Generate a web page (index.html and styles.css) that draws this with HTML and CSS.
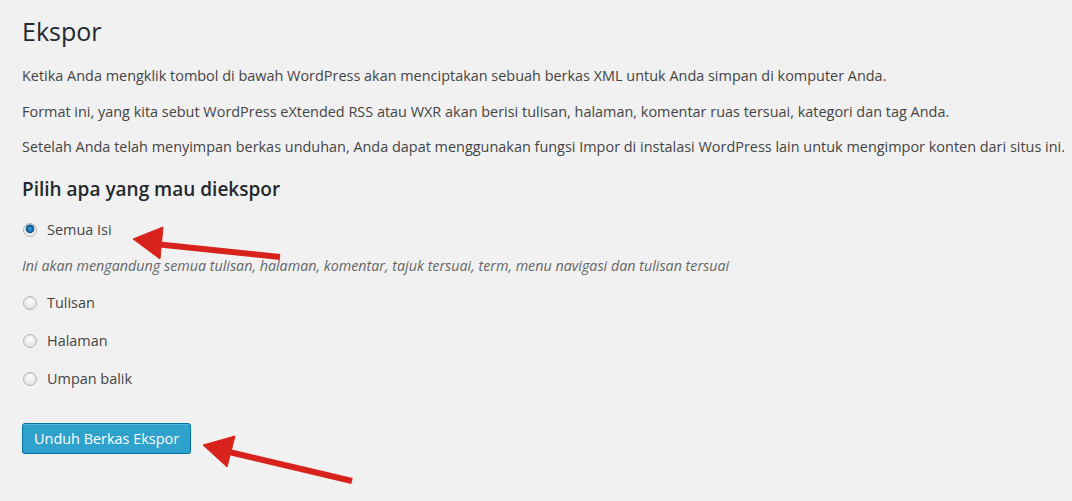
FILE: index.html
```html
<!DOCTYPE html>
<html lang="id">
<head>
    <meta charset="UTF-8">
    <title>Ekspor</title>
    <link rel="stylesheet" href="styles.css">
</head>
<body>
    <div class="wrap">
        <h1>Ekspor</h1>
        <p>Ketika Anda mengklik tombol di bawah WordPress akan menciptakan sebuah berkas XML untuk Anda simpan di komputer Anda.</p>
        <p>Format ini, yang kita sebut WordPress eXtended RSS atau WXR akan berisi tulisan, halaman, komentar ruas tersuai, kategori dan tag Anda.</p>
        <p>Setelah Anda telah menyimpan berkas unduhan, Anda dapat menggunakan fungsi Impor di instalasi WordPress lain untuk mengimpor konten dari situs ini.</p>

        <h3>Pilih apa yang mau diekspor</h3>

        <form class="export-form">
            <label class="option"><input type="radio" name="content" checked><span>Semua Isi</span></label>
            <p class="description">Ini akan mengandung semua tulisan, halaman, komentar, tajuk tersuai, term, menu navigasi dan tulisan tersuai</p>
            <label class="option"><input type="radio" name="content"><span>Tulisan</span></label>
            <label class="option"><input type="radio" name="content"><span>Halaman</span></label>
            <label class="option"><input type="radio" name="content"><span>Umpan balik</span></label>

            <div class="submit">
                <button type="button" class="button-primary">Unduh Berkas Ekspor</button>
            </div>
        </form>
    </div>

    <svg class="arrows" width="1072" height="501" viewBox="0 0 1072 501">
        <g fill="#d8231d" stroke="#d8231d">
            <line x1="155" y1="244" x2="280" y2="257" stroke-width="6"/>
            <polygon points="133,239 163,227 160,259" stroke-width="1"/>
            <line x1="225" y1="451" x2="352" y2="481" stroke-width="6"/>
            <polygon points="203,445 235,436 227,467" stroke-width="1"/>
        </g>
    </svg>
</body>
</html>
```

FILE: styles.css
```css
body {
    margin: 0;
    background-color: #f1f1f1;
    color: #444;
    font-family: "Open Sans", sans-serif;
    font-size: 14.45px;
    line-height: 1.5;
}

.wrap {
    padding: 10px 0 0 22px;
}

h1 {
    font-size: 25px;
    font-weight: 400;
    line-height: 29px;
    color: #23282d;
    margin: 7px 0 19px 0;
}

p {
    margin: 0 0 14px 0;
    white-space: nowrap;
}

h3 {
    font-size: 19px;
    font-weight: 600;
    color: #23282d;
    margin: 17px 0 7px 0;
}

.export-form {
    display: flex;
    flex-direction: column;
}

.option {
    display: flex;
    align-items: center;
    gap: 10px;
    height: 38px;
}

.option input {
    appearance: none;
    margin: 0 0 0 1px;
    width: 14px;
    height: 14px;
    border-radius: 50%;
    border: 1px solid #b4b4b4;
    background: radial-gradient(circle at 50% 30%, #fefefe, #dcdcdc);
    box-shadow: inset 0 1px 1px rgba(0, 0, 0, 0.08);
}

.option input:checked {
    background: radial-gradient(circle at 50% 40%, #3fa0dc 0, #1168a8 3px, #0d4f85 4px, #e6e6e6 4.6px, #f6f6f6 7px);
}

.description {
    font-style: italic;
    font-size: 14.3px;
    color: #666;
    margin: 6px 0 8px 0;
}

.submit {
    padding: 25px 0 0 0;
}

.button-primary {
    font-family: "Open Sans", sans-serif;
    font-size: 14.45px;
    color: #fff;
    background-color: #2ea2cc;
    border: 1px solid #0074a2;
    border-radius: 3px;
    box-shadow: inset 0 1px 0 rgba(120, 200, 230, 0.5), 0 1px 0 rgba(0, 0, 0, 0.15);
    height: 31px;
    padding: 0 11px;
    cursor: pointer;
}

.arrows {
    position: absolute;
    top: 0;
    left: 0;
    pointer-events: none;
}
```
